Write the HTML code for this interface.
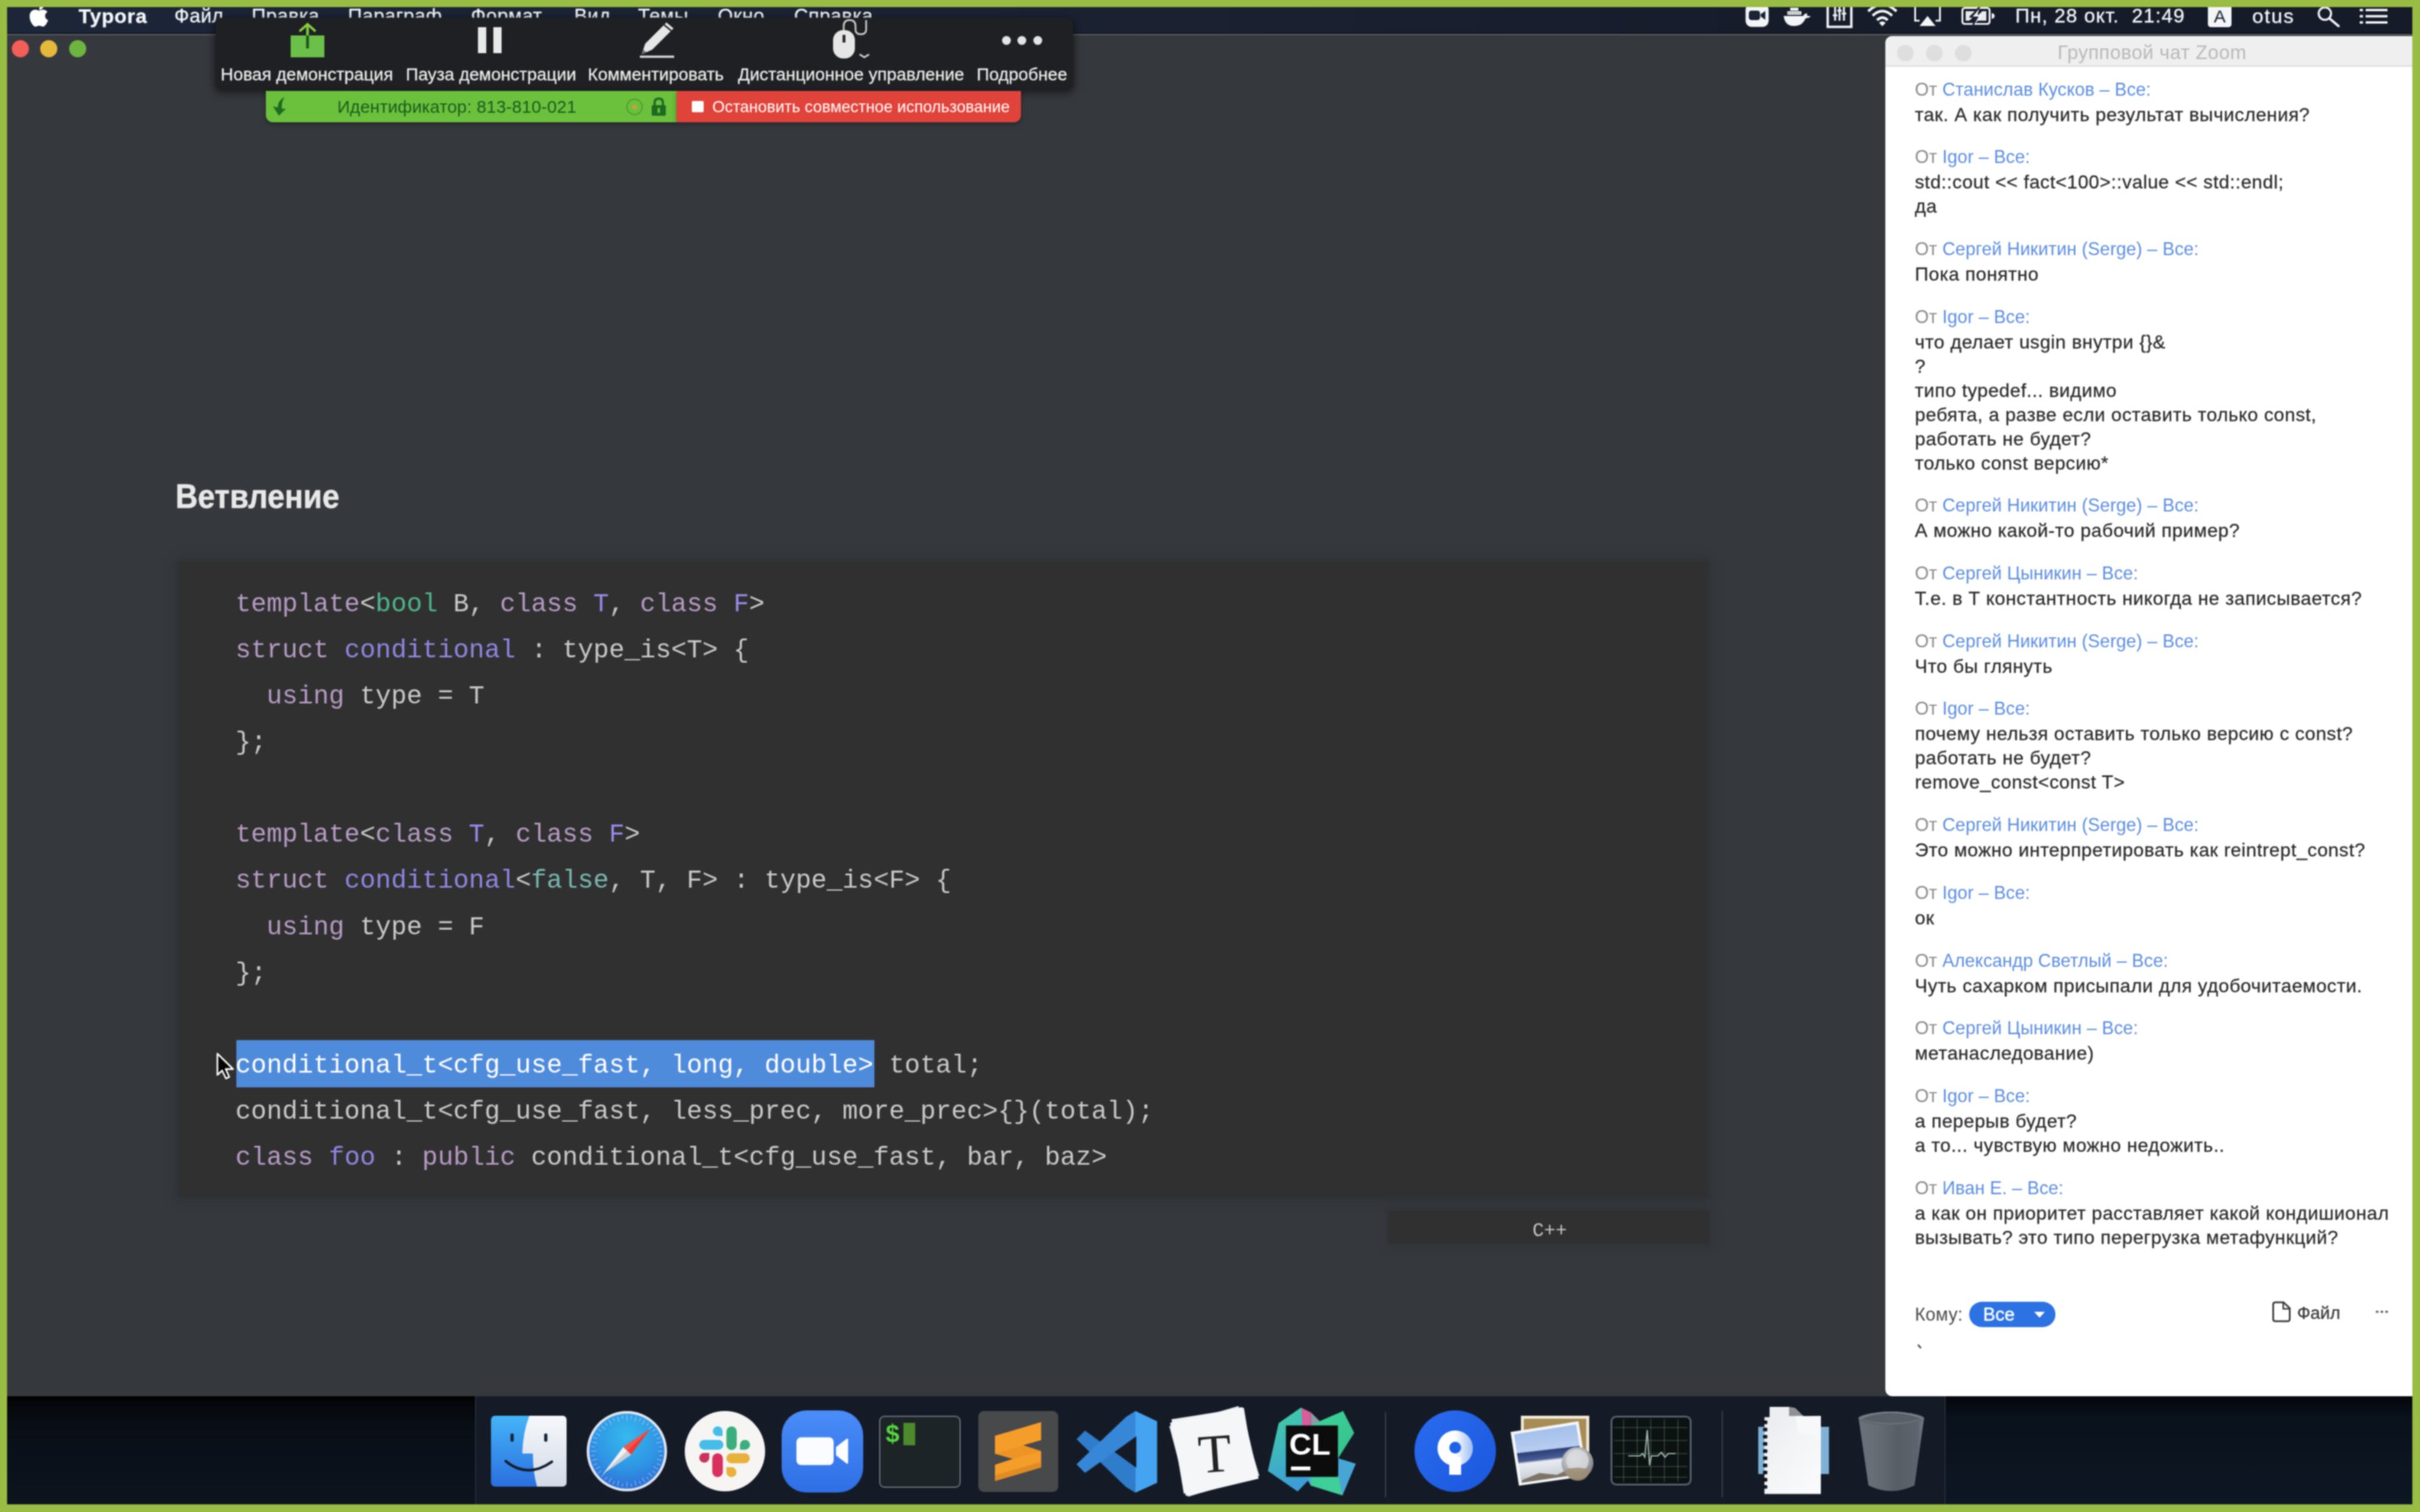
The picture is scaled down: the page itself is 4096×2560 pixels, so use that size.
<!DOCTYPE html>
<html><head><meta charset="utf-8"><title>screen</title><style>
*{box-sizing:border-box}
html,body{margin:0;padding:0}
body{width:4096px;height:2560px;background:#98bc44;position:relative;overflow:hidden;font-family:"Liberation Sans",sans-serif}
.a{position:absolute}
#root{position:absolute;left:0;top:0;width:4096px;height:2560px;overflow:hidden;filter:blur(1px)}
#desk{left:12px;top:12px;width:4071px;height:2535px;background:linear-gradient(#000 0,#000 2352px,#05070b 2364px,#0a0f17 2410px,#0c141e 2535px);overflow:hidden}
#menubar{left:12px;top:12px;width:4071px;height:44px;background:linear-gradient(90deg,#1c2638 0,#1b2333 40%,#171c2b 75%,#161b29 100%)}
.mi{-webkit-text-stroke:.4px #f4f6fa;top:5px;height:44px;line-height:44px;font-size:33px;color:#f4f6fa;white-space:pre;letter-spacing:.6px}
#win{left:12px;top:57px;width:4071px;height:2307px;background:#35383d;border-top:3px solid #505358}
.tl{top:68px;width:29px;height:29px;border-radius:50%}
#h1{left:297px;top:800.500px;-webkit-text-stroke:.7px #e8e8e8;font-size:56.500px;font-weight:700;color:#e8e8e8;line-height:80px;white-space:pre;transform-origin:0 50%;transform:scaleX(.925)}
#code{left:302px;top:951px;width:2588px;height:1076px;background:#303030;box-shadow:0 0 14px 4px rgba(40,42,50,.55)}
.cl{left:398.500px;height:78px;line-height:78px;font-family:"Liberation Mono",monospace;font-size:43.9px;color:#c9c9c9;white-space:pre}
.k{color:#b59bc4}.d{color:#8f86e0}.t{color:#4fb58d}.v{color:#9a8ce8}.at{color:#79b8b0}
#sel{left:400px;top:1761px;width:1080px;height:80px;background:#4f8bdb}
#lang{left:2350px;top:2050px;width:2543px;height:55px}
#chat{left:3191px;top:61px;width:893px;height:2303px;background:#fff;border-radius:12px 0 0 12px;overflow:hidden}
#chat .tb{left:0;top:0;width:893px;height:52px;background:#efefef;border-bottom:2px solid #dcdcdc}
.ch{left:3241px;height:45px;line-height:45px;font-size:30.5px;color:#8b8b8b;white-space:pre;letter-spacing:.1px}
.ch b{font-weight:400;color:#5b8de0}
.cm{-webkit-text-stroke:.3px #2a2a2a;left:3241px;height:41px;line-height:41px;font-size:32px;color:#2a2a2a;white-space:pre;letter-spacing:.62px}

.zl{-webkit-text-stroke:.35px #ececec;top:104px;height:43px;line-height:43px;font-size:29.6px;color:#ececec;white-space:pre}
#dock{left:804px;top:2364px;width:2489px;height:183px;background:#151b26;border-left:2px solid #262c36;border-right:2px solid #262c36}
</style></head><body>
<div id="root">
<div id="desk" class="a"></div>
<div class="a" style="left:3293px;top:2364px;width:790px;height:183px;background:linear-gradient(#04060a 0,#0a121c 36px,#0d1723 183px)"></div>
<div id="win" class="a"></div>
<div id="menubar" class="a"></div>
<div class="a tl" style="left:20px;background:#f35f57"></div>
<div class="a tl" style="left:68px;background:#e6b93c"></div>
<div class="a tl" style="left:117px;background:#6db53e"></div>
<div class="a mi" style="left:133px;font-weight:700;font-size:34px;letter-spacing:.9px">Typora</div>
<div class="a mi" style="left:295px">Файл</div>
<div class="a mi" style="left:426px">Правка</div>
<div class="a mi" style="left:589px">Параграф</div>
<div class="a mi" style="left:797px">Формат</div>
<div class="a mi" style="left:972px">Вид</div>
<div class="a mi" style="left:1080px">Темы</div>
<div class="a mi" style="left:1215px">Окно</div>
<div class="a mi" style="left:1344px">Справка</div>
<div class="a mi" style="left:3411px;font-size:33.5px;letter-spacing:1.25px">Пн, 28 окт.  21:49</div>
<div class="a mi" style="left:3812px;font-size:34px;letter-spacing:1.9px">otus</div>
<svg class="a" style="left:50px;top:5.500px" width="36.500" height="40.300" viewBox="0 0 38 42">
<path d="M25.500 1 C25.800 4.200 24.500 6.800 22.800 8.600 C21 10.400 18.800 11.300 17 11.100 C16.700 8.300 18 5.700 19.600 4.100 C21.300 2.300 23.800 1.200 25.500 1 Z M31.500 14.800 C29 16.300 27.300 18.900 27.400 21.900 C27.500 25.500 29.700 28.100 32.800 29.300 C32.100 31.600 31 33.800 29.500 35.900 C27.800 38.300 26 40.700 23.300 40.700 C20.700 40.700 19.900 39.100 16.900 39.100 C13.900 39.100 13 40.700 10.500 40.800 C7.900 40.900 6 38.200 4.300 35.800 C0.900 30.800 -1.700 21.800 1.800 15.700 C3.500 12.700 6.700 10.800 10.100 10.700 C12.600 10.700 15 12.400 16.600 12.400 C18.100 12.400 21.100 10.300 24.200 10.600 C25.500 10.700 29.200 11.100 31.500 14.800 Z" fill="#fff"/>
</svg>
<svg class="a" style="left:2954px;top:6px" width="40" height="40" viewBox="0 0 40 40">
<rect x="0.500" y="0.500" width="39" height="39" rx="10" fill="#f4f5f7"/>
<rect x="6" y="12" width="19" height="16" rx="4.500" fill="#1b2434"/>
<path d="M26 18 L34 12.500 V27.500 L26 22 Z" fill="#1b2434"/>
</svg>
<svg class="a" style="left:3018px;top:10px" width="48" height="36" viewBox="0 0 48 36">
<path d="M1 17 H34 Q37 12 41 13 Q40 15 41 17 Q45 16.500 47 18 Q43 21 38 21 Q33 34 18 34 Q3 34 1 17 Z" fill="#f4f5f7"/>
<rect x="7" y="9" width="24" height="6" rx="1" fill="#f4f5f7"/>
<rect x="12" y="3" width="14" height="5" rx="1" fill="#f4f5f7"/>
<path d="M8 12 H30" stroke="#1b2434" stroke-width="1.200" stroke-dasharray="3 1.500"/>
</svg>
<svg class="a" style="left:3091px;top:4px" width="45" height="45" viewBox="0 0 45 45">
<rect x="2.500" y="2.500" width="40" height="39" fill="none" stroke="#f4f5f7" stroke-width="4"/>
<path d="M15 7 V31 M22.500 7 V31 M30 7 V31" stroke="#f4f5f7" stroke-width="3.200"/>
<path d="M11 22 H19 M18.500 14 H26.500 M26 19 H34" stroke="#f4f5f7" stroke-width="3"/>
</svg>
<svg class="a" style="left:3159px;top:5px" width="54" height="42" viewBox="0 0 54 42">
<path d="M3 14 Q27 -8 51 14" stroke="#f4f5f7" stroke-width="4.500" fill="none"/>
<path d="M10.500 21.500 Q27 6 43.500 21.500" stroke="#f4f5f7" stroke-width="4.500" fill="none"/>
<path d="M18 29 Q27 20.500 36 29" stroke="#f4f5f7" stroke-width="4.500" fill="none"/>
<path d="M27 39.500 L21.500 33.500 Q27 29 32.500 33.500 Z" fill="#f4f5f7"/>
</svg>
<svg class="a" style="left:3239px;top:5px" width="47" height="42" viewBox="0 0 47 42">
<path d="M10 30 H2.500 V3 H44.500 V30 H37" stroke="#f4f5f7" stroke-width="3" fill="none"/>
<path d="M23.500 22 L37 39 H10 Z" fill="#f4f5f7"/>
</svg>
<svg class="a" style="left:3319px;top:11px" width="60" height="34" viewBox="0 0 60 34">
<rect x="2.500" y="2.500" width="46" height="27" rx="4" fill="none" stroke="#f4f5f7" stroke-width="3.200"/>
<path d="M52 11 Q57 12 57 16 Q57 20 52 21 Z" fill="#f4f5f7"/>
<path d="M8 8 H24 L14 17 H22 L14 24 H8 Z" fill="#f4f5f7" opacity=".95"/>
<path d="M43 8 V24 H26 L37 15 H29 L36 8 Z" fill="#f4f5f7" opacity=".95"/>
<path d="M33 -1 L17 17.500 H27 L19 35" stroke="#1b2434" stroke-width="3" fill="none"/>
<path d="M31 4 L20 17 H30 L23 30 L38 14 H28 Z" fill="#f4f5f7"/>
</svg>
<div class="a" style="left:3737px;top:4px;width:40px;height:42px;border-radius:5px;background:#f4f5f7;color:#1b2434;font-size:30px;line-height:47px;text-align:center;font-weight:400">A</div>
<svg class="a" style="left:3920px;top:9px" width="42" height="38" viewBox="0 0 42 38">
<circle cx="15" cy="14" r="10.500" fill="none" stroke="#f4f5f7" stroke-width="3.500"/>
<path d="M22.500 22 L38 35" stroke="#f4f5f7" stroke-width="4.200" stroke-linecap="round"/>
</svg>
<svg class="a" style="left:3993px;top:13px" width="50" height="30" viewBox="0 0 50 30">
<path d="M11 4 H48 M11 14.500 H48 M11 25 H48" stroke="#f4f5f7" stroke-width="4.200"/>
<path d="M1 4 H6.500 M1 14.500 H6.500 M1 25 H6.500" stroke="#f4f5f7" stroke-width="4.200"/>
</svg>
<div id="h1" class="a">Ветвление</div>
<div id="code" class="a"></div>
<div id="sel" class="a"></div>
<div class="a cl" style="top:983.5px"><span class="k">template</span>&lt;<span class="t">bool</span> B, <span class="k">class</span> <span class="v">T</span>, <span class="k">class</span> <span class="v">F</span>&gt;</div>
<div class="a cl" style="top:1061.7px"><span class="k">struct</span> <span class="d">conditional</span> : type_is&lt;T&gt; {</div>
<div class="a cl" style="top:1139.8px">  <span class="k">using</span> type = T</div>
<div class="a cl" style="top:1218.0px">};</div>
<div class="a cl" style="top:1374.2px"><span class="k">template</span>&lt;<span class="k">class</span> <span class="v">T</span>, <span class="k">class</span> <span class="v">F</span>&gt;</div>
<div class="a cl" style="top:1452.4px"><span class="k">struct</span> <span class="d">conditional</span>&lt;<span class="at">false</span>, T, F&gt; : type_is&lt;F&gt; {</div>
<div class="a cl" style="top:1530.6px">  <span class="k">using</span> type = F</div>
<div class="a cl" style="top:1608.7px">};</div>
<div class="a cl" style="top:1765.0px"><span style="color:#fff">conditional_t&lt;cfg_use_fast, long, double&gt;</span> total;</div>
<div class="a cl" style="top:1843.2px">conditional_t&lt;cfg_use_fast, less_prec, more_prec&gt;{}(total);</div>
<div class="a cl" style="top:1921.3px"><span class="k">class</span> <span class="d">foo</span> : <span class="k">public</span> conditional_t&lt;cfg_use_fast, bar, baz&gt;</div>
<div class="a" style="left:2350px;top:2050px;width:543px;height:55px;background:#303030;box-shadow:0 0 12px 4px rgba(44,46,52,.6)"></div>
<div class="a" style="left:2350px;top:2050px;width:543px;height:70px;line-height:70px;text-align:center;font-family:'Liberation Mono',monospace;font-size:32.5px;color:#c4c4c4;letter-spacing:0px;padding-left:3px">C++</div>
<div id="chat" class="a"><div class="a tb"></div></div>
<div class="a" style="left:3211px;top:76px;width:28px;height:28px;border-radius:50%;background:#dedede"></div>
<div class="a" style="left:3260px;top:76px;width:28px;height:28px;border-radius:50%;background:#dedede"></div>
<div class="a" style="left:3309px;top:76px;width:28px;height:28px;border-radius:50%;background:#dedede"></div>
<div class="a" style="left:3191px;top:61px;width:893px;height:53px;line-height:56px;text-align:center;font-size:33px;color:#b9b9b9;padding-left:10px;letter-spacing:.5px">Групповой чат Zoom</div>
<div class="a ch" style="top:128.5px">От <b>Станислав Кусков – Все:</b></div>
<div class="a cm" style="top:173.5px">так. А как получить результат вычисления?</div>
<div class="a ch" style="top:243.2px">От <b>Igor – Все:</b></div>
<div class="a cm" style="top:288.2px">std::cout &lt;&lt; fact&lt;100&gt;::value &lt;&lt; std::endl;</div>
<div class="a cm" style="top:329.2px">да</div>
<div class="a ch" style="top:398.9px">От <b>Сергей Никитин (Serge) – Все:</b></div>
<div class="a cm" style="top:443.9px">Пока понятно</div>
<div class="a ch" style="top:513.6px">От <b>Igor – Все:</b></div>
<div class="a cm" style="top:558.6px">что делает usgin внутри {}&amp;</div>
<div class="a cm" style="top:599.6px">?</div>
<div class="a cm" style="top:640.6px">типо typedef... видимо</div>
<div class="a cm" style="top:681.6px">ребята, а разве если оставить только const,</div>
<div class="a cm" style="top:722.6px">работать не будет?</div>
<div class="a cm" style="top:763.6px">только const версию*</div>
<div class="a ch" style="top:833.3px">От <b>Сергей Никитин (Serge) – Все:</b></div>
<div class="a cm" style="top:878.3px">А можно какой-то рабочий пример?</div>
<div class="a ch" style="top:948.0px">От <b>Сергей Цыникин – Все:</b></div>
<div class="a cm" style="top:993.0px">Т.е. в Т константность никогда не записывается?</div>
<div class="a ch" style="top:1062.7px">От <b>Сергей Никитин (Serge) – Все:</b></div>
<div class="a cm" style="top:1107.7px">Что бы глянуть</div>
<div class="a ch" style="top:1177.4px">От <b>Igor – Все:</b></div>
<div class="a cm" style="top:1222.4px">почему нельзя оставить только версию с const?</div>
<div class="a cm" style="top:1263.4px">работать не будет?</div>
<div class="a cm" style="top:1304.4px">remove_const&lt;const T&gt;</div>
<div class="a ch" style="top:1374.1px">От <b>Сергей Никитин (Serge) – Все:</b></div>
<div class="a cm" style="top:1419.1px">Это можно интерпретировать как reintrept_const?</div>
<div class="a ch" style="top:1488.8px">От <b>Igor – Все:</b></div>
<div class="a cm" style="top:1533.8px">ок</div>
<div class="a ch" style="top:1603.5px">От <b>Александр Светлый – Все:</b></div>
<div class="a cm" style="top:1648.5px">Чуть сахарком присыпали для удобочитаемости.</div>
<div class="a ch" style="top:1718.2px">От <b>Сергей Цыникин – Все:</b></div>
<div class="a cm" style="top:1763.2px">метанаследование)</div>
<div class="a ch" style="top:1832.9px">От <b>Igor – Все:</b></div>
<div class="a cm" style="top:1877.9px">а перерыв будет?</div>
<div class="a cm" style="top:1918.9px">а то... чувствую можно недожить..</div>
<div class="a ch" style="top:1988.6px">От <b>Иван Е. – Все:</b></div>
<div class="a cm" style="top:2033.6px">а как он приоритет расставляет какой кондишионал</div>
<div class="a cm" style="top:2074.6px">вызывать? это типо перегрузка метафункций?</div>
<div class="a" style="left:3241px;top:2205px;height:41px;line-height:41px;color:#4a4a4a;font-size:30.5px;white-space:pre;letter-spacing:.3px">Кому:</div>
<div class="a" style="left:3333px;top:2204px;width:146px;height:43px;border-radius:22px;background:#2d72e2"></div>
<div class="a" style="left:3356.500px;top:2204px;height:43px;line-height:44px;font-size:31px;color:#fff;-webkit-text-stroke:.5px #fff">Все</div>
<div class="a" style="left:3442.500px;top:2220.500px;width:0;height:0;border-left:9px solid transparent;border-right:9px solid transparent;border-top:10px solid #fff"></div>
<svg class="a" style="left:3844px;top:2201px" width="36" height="40" viewBox="0 0 36 40"><path d="M7 4 H21 L31.500 14 V32 Q31.500 36 27.500 36 H7 Q3.500 36 3.500 32 V8 Q3.500 4 7 4 Z" fill="none" stroke="#3c3c3c" stroke-width="3"/><path d="M20.500 4.500 V15 H31" fill="none" stroke="#3c3c3c" stroke-width="2.600"/></svg>
<div class="a" style="left:3888px;top:2202px;height:41px;line-height:41px;font-size:29.700px;color:#3a3a3a;-webkit-text-stroke:.4px #3a3a3a">Файл</div>
<div class="a" style="left:4021px;top:2218.500px;width:4.500px;height:4.500px;border-radius:50%;background:#6a6a6a"></div>
<div class="a" style="left:4029px;top:2218.500px;width:4.500px;height:4.500px;border-radius:50%;background:#6a6a6a"></div>
<div class="a" style="left:4037px;top:2218.500px;width:4.500px;height:4.500px;border-radius:50%;background:#6a6a6a"></div>
<div class="a" style="left:3245px;top:2278px;width:7.500px;height:2.800px;background:#555;transform:rotate(48deg);border-radius:1px"></div>
<svg class="a" style="left:364px;top:1780px" width="36" height="52" viewBox="-4 -4 36 52"><path d="M0 0 V36 L8 28.500 L14.500 42 L20 39.500 L14 26 H26.500 Z" fill="#050505" stroke="#fff" stroke-width="2.800" stroke-linejoin="round"/></svg>
<div class="a" style="left:365px;top:30px;width:1451px;height:121px;background:#1f2023;border-radius:10px;box-shadow:0 4px 14px 2px rgba(0,0,0,.55)"></div>
<div class="a zl" style="left:373.6px;">Новая демонстрация</div>
<div class="a zl" style="left:686.7px;">Пауза демонстрации</div>
<div class="a zl" style="left:994.8px;">Комментировать</div>
<div class="a zl" style="left:1249px;">Дистанционное управление</div>
<div class="a zl" style="left:1653px;">Подробнее</div>
<svg class="a" style="left:480px;top:34px" width="80" height="70" viewBox="0 0 80 70">
<rect x="12" y="26" width="57" height="37" fill="#6cc04a"/>
<path d="M40.500 48 V9" stroke="#1d5a1d" stroke-width="5" fill="none"/>
<path d="M40.500 26 V9" stroke="#7cc63c" stroke-width="4.500" fill="none"/>
<path d="M27 19 L40.500 7 L54 19" stroke="#8ccf3f" stroke-width="4" fill="none"/>
</svg>
<div class="a" style="left:809px;top:46px;width:13.500px;height:44px;background:#e9e9e9"></div>
<div class="a" style="left:835px;top:46px;width:14px;height:44px;background:#e9e9e9"></div>
<svg class="a" style="left:1076px;top:32px" width="72" height="72" viewBox="0 0 72 72">
<path d="M52 6 L64 16 L28 52 L10 60 L16 42 Z" fill="#e6e6e6"/>
<path d="M48 10 L60 20" stroke="#1f2023" stroke-width="2.500"/>
<path d="M10 60 L18 56.500 L13 52 Z" fill="#1f2023" opacity=".55"/>
<rect x="7" y="62" width="58" height="4" fill="#cfcfcf"/>
</svg>
<svg class="a" style="left:1400px;top:26px" width="80" height="80" viewBox="0 0 80 80">
<path d="M28 26 V18 Q28 8 38 8 Q48 8 48 18 V24 Q48 32 57 32 Q66 32 66 24 V8" stroke="#c9c9c9" stroke-width="3" fill="none"/>
<rect x="10" y="25" width="37" height="48" rx="17" fill="#e6e6e6"/>
<rect x="26" y="33" width="5" height="13" fill="#2a2b2e"/>
<path d="M55 66 L63 71 L71 66" stroke="#d0d0d0" stroke-width="3" fill="none"/>
</svg>
<div class="a" style="left:1695.5px;top:61px;width:15px;height:15px;border-radius:50%;background:#e4e4e4"></div>
<div class="a" style="left:1722.0px;top:61px;width:15px;height:15px;border-radius:50%;background:#e4e4e4"></div>
<div class="a" style="left:1749.0px;top:61px;width:15px;height:15px;border-radius:50%;background:#e4e4e4"></div>
<div class="a" style="left:450px;top:154px;width:696px;height:53px;background:#6cc13c;border-radius:0 0 0 12px;box-shadow:0 3px 8px rgba(0,0,0,.35)"></div>
<div class="a" style="left:1145px;top:154px;width:583px;height:53px;background:#e0433a;border-radius:0 0 12px 0;box-shadow:0 3px 8px rgba(0,0,0,.35)"></div>
<div class="a" style="left:571px;top:154px;height:53px;line-height:53px;font-size:29.6px;color:#1b5a20;white-space:pre;letter-spacing:.1px">Идентификатор: 813-810-021</div>
<div class="a" style="left:1205.5px;top:154px;height:53px;line-height:53px;font-size:27.3px;color:#fff;white-space:pre">Остановить совместное использование</div>
<div class="a" style="left:1171px;top:171px;width:20px;height:19px;background:#fff;border-radius:2px"></div>
<svg class="a" style="left:456px;top:160px" width="40" height="42" viewBox="0 0 40 42">
<path d="M26 4 Q14 10 14 22 L6 20 L16 36 L28 24 L21 24 Q20 12 26 4 Z" fill="#1f6a22"/>
</svg>
<div class="a" style="left:1060px;top:167px;width:28px;height:28px;border-radius:50%;border:2.500px solid #4e9a2e"></div>
<div class="a" style="left:1070px;top:177px;width:8px;height:8px;border-radius:50%;background:#c9a23c"></div>
<svg class="a" style="left:1100px;top:164px" width="30" height="34" viewBox="0 0 30 34">
<path d="M8 15 V10 Q8 3 15 3 Q22 3 22 10 V15" stroke="#1f6a22" stroke-width="4" fill="none"/>
<rect x="3" y="14" width="24" height="18" rx="2" fill="#1f6a22"/>
<rect x="13" y="19" width="4" height="8" fill="#6cc13c"/>
</svg>
<div id="dock" class="a"></div>
<svg class="a" style="left:831px;top:2397px" width="128" height="120" viewBox="0 0 128 120">
<defs><linearGradient id="fb" x1="0" y1="0" x2="0" y2="1"><stop offset="0" stop-color="#45b4f7"/><stop offset="1" stop-color="#2b6fe0"/></linearGradient>
<linearGradient id="fw" x1="0" y1="0" x2="0" y2="1"><stop offset="0" stop-color="#f6f8fb"/><stop offset="1" stop-color="#d3dbe8"/></linearGradient>
<clipPath id="fc"><rect x="0" y="0" width="128" height="120" rx="7"/></clipPath></defs>
<g clip-path="url(#fc)"><rect width="128" height="120" fill="url(#fb)"/>
<path d="M65 0 Q54 28 53 64 H71 Q71 96 78 120 H128 V0 Z" fill="url(#fw)"/>
<rect x="33" y="30" width="5.500" height="14" rx="2.500" fill="#16243a"/><rect x="90" y="30" width="5.500" height="14" rx="2.500" fill="#16243a"/>
<path d="M25 77 Q62 107 103 78" stroke="#141e30" stroke-width="4.500" fill="none" stroke-linecap="round"/></g>
</svg>
<svg class="a" style="left:991px;top:2387px" width="140" height="140" viewBox="0 0 140 140">
<defs><radialGradient id="sg" cx=".5" cy=".3" r=".8"><stop offset="0" stop-color="#36b9ee"/><stop offset=".55" stop-color="#2f94e4"/><stop offset="1" stop-color="#2c62d2"/></radialGradient></defs>
<circle cx="70" cy="70" r="68" fill="#dfe5f2"/><circle cx="70" cy="70" r="63.500" fill="url(#sg)"/>
<g opacity=".55"><line x1="70" y1="9" x2="70" y2="18" stroke="#dfeaf8" stroke-width="1.300" transform="rotate(0.0 70 70)"/><line x1="70" y1="9" x2="70" y2="15" stroke="#dfeaf8" stroke-width="1.300" transform="rotate(7.5 70 70)"/><line x1="70" y1="9" x2="70" y2="18" stroke="#dfeaf8" stroke-width="1.300" transform="rotate(15.0 70 70)"/><line x1="70" y1="9" x2="70" y2="15" stroke="#dfeaf8" stroke-width="1.300" transform="rotate(22.5 70 70)"/><line x1="70" y1="9" x2="70" y2="18" stroke="#dfeaf8" stroke-width="1.300" transform="rotate(30.0 70 70)"/><line x1="70" y1="9" x2="70" y2="15" stroke="#dfeaf8" stroke-width="1.300" transform="rotate(37.5 70 70)"/><line x1="70" y1="9" x2="70" y2="18" stroke="#dfeaf8" stroke-width="1.300" transform="rotate(45.0 70 70)"/><line x1="70" y1="9" x2="70" y2="15" stroke="#dfeaf8" stroke-width="1.300" transform="rotate(52.5 70 70)"/><line x1="70" y1="9" x2="70" y2="18" stroke="#dfeaf8" stroke-width="1.300" transform="rotate(60.0 70 70)"/><line x1="70" y1="9" x2="70" y2="15" stroke="#dfeaf8" stroke-width="1.300" transform="rotate(67.5 70 70)"/><line x1="70" y1="9" x2="70" y2="18" stroke="#dfeaf8" stroke-width="1.300" transform="rotate(75.0 70 70)"/><line x1="70" y1="9" x2="70" y2="15" stroke="#dfeaf8" stroke-width="1.300" transform="rotate(82.5 70 70)"/><line x1="70" y1="9" x2="70" y2="18" stroke="#dfeaf8" stroke-width="1.300" transform="rotate(90.0 70 70)"/><line x1="70" y1="9" x2="70" y2="15" stroke="#dfeaf8" stroke-width="1.300" transform="rotate(97.5 70 70)"/><line x1="70" y1="9" x2="70" y2="18" stroke="#dfeaf8" stroke-width="1.300" transform="rotate(105.0 70 70)"/><line x1="70" y1="9" x2="70" y2="15" stroke="#dfeaf8" stroke-width="1.300" transform="rotate(112.5 70 70)"/><line x1="70" y1="9" x2="70" y2="18" stroke="#dfeaf8" stroke-width="1.300" transform="rotate(120.0 70 70)"/><line x1="70" y1="9" x2="70" y2="15" stroke="#dfeaf8" stroke-width="1.300" transform="rotate(127.5 70 70)"/><line x1="70" y1="9" x2="70" y2="18" stroke="#dfeaf8" stroke-width="1.300" transform="rotate(135.0 70 70)"/><line x1="70" y1="9" x2="70" y2="15" stroke="#dfeaf8" stroke-width="1.300" transform="rotate(142.5 70 70)"/><line x1="70" y1="9" x2="70" y2="18" stroke="#dfeaf8" stroke-width="1.300" transform="rotate(150.0 70 70)"/><line x1="70" y1="9" x2="70" y2="15" stroke="#dfeaf8" stroke-width="1.300" transform="rotate(157.5 70 70)"/><line x1="70" y1="9" x2="70" y2="18" stroke="#dfeaf8" stroke-width="1.300" transform="rotate(165.0 70 70)"/><line x1="70" y1="9" x2="70" y2="15" stroke="#dfeaf8" stroke-width="1.300" transform="rotate(172.5 70 70)"/><line x1="70" y1="9" x2="70" y2="18" stroke="#dfeaf8" stroke-width="1.300" transform="rotate(180.0 70 70)"/><line x1="70" y1="9" x2="70" y2="15" stroke="#dfeaf8" stroke-width="1.300" transform="rotate(187.5 70 70)"/><line x1="70" y1="9" x2="70" y2="18" stroke="#dfeaf8" stroke-width="1.300" transform="rotate(195.0 70 70)"/><line x1="70" y1="9" x2="70" y2="15" stroke="#dfeaf8" stroke-width="1.300" transform="rotate(202.5 70 70)"/><line x1="70" y1="9" x2="70" y2="18" stroke="#dfeaf8" stroke-width="1.300" transform="rotate(210.0 70 70)"/><line x1="70" y1="9" x2="70" y2="15" stroke="#dfeaf8" stroke-width="1.300" transform="rotate(217.5 70 70)"/><line x1="70" y1="9" x2="70" y2="18" stroke="#dfeaf8" stroke-width="1.300" transform="rotate(225.0 70 70)"/><line x1="70" y1="9" x2="70" y2="15" stroke="#dfeaf8" stroke-width="1.300" transform="rotate(232.5 70 70)"/><line x1="70" y1="9" x2="70" y2="18" stroke="#dfeaf8" stroke-width="1.300" transform="rotate(240.0 70 70)"/><line x1="70" y1="9" x2="70" y2="15" stroke="#dfeaf8" stroke-width="1.300" transform="rotate(247.5 70 70)"/><line x1="70" y1="9" x2="70" y2="18" stroke="#dfeaf8" stroke-width="1.300" transform="rotate(255.0 70 70)"/><line x1="70" y1="9" x2="70" y2="15" stroke="#dfeaf8" stroke-width="1.300" transform="rotate(262.5 70 70)"/><line x1="70" y1="9" x2="70" y2="18" stroke="#dfeaf8" stroke-width="1.300" transform="rotate(270.0 70 70)"/><line x1="70" y1="9" x2="70" y2="15" stroke="#dfeaf8" stroke-width="1.300" transform="rotate(277.5 70 70)"/><line x1="70" y1="9" x2="70" y2="18" stroke="#dfeaf8" stroke-width="1.300" transform="rotate(285.0 70 70)"/><line x1="70" y1="9" x2="70" y2="15" stroke="#dfeaf8" stroke-width="1.300" transform="rotate(292.5 70 70)"/><line x1="70" y1="9" x2="70" y2="18" stroke="#dfeaf8" stroke-width="1.300" transform="rotate(300.0 70 70)"/><line x1="70" y1="9" x2="70" y2="15" stroke="#dfeaf8" stroke-width="1.300" transform="rotate(307.5 70 70)"/><line x1="70" y1="9" x2="70" y2="18" stroke="#dfeaf8" stroke-width="1.300" transform="rotate(315.0 70 70)"/><line x1="70" y1="9" x2="70" y2="15" stroke="#dfeaf8" stroke-width="1.300" transform="rotate(322.5 70 70)"/><line x1="70" y1="9" x2="70" y2="18" stroke="#dfeaf8" stroke-width="1.300" transform="rotate(330.0 70 70)"/><line x1="70" y1="9" x2="70" y2="15" stroke="#dfeaf8" stroke-width="1.300" transform="rotate(337.5 70 70)"/><line x1="70" y1="9" x2="70" y2="18" stroke="#dfeaf8" stroke-width="1.300" transform="rotate(345.0 70 70)"/><line x1="70" y1="9" x2="70" y2="15" stroke="#dfeaf8" stroke-width="1.300" transform="rotate(352.5 70 70)"/></g>
<path d="M110 32 L64 63 L77 76 Z" fill="#ee3b33"/><path d="M110 32 L64 63 L70.500 69.500 Z" fill="#f2564c"/>
<path d="M30 108 L64 63 L77 76 Z" fill="#f1f1f1"/><path d="M30 108 L70.500 69.500 L77 76 Z" fill="#c9ccd2"/>
</svg>
<svg class="a" style="left:1158px;top:2388px" width="138" height="138" viewBox="0 0 138 138">
<circle cx="69" cy="69" r="68" fill="#f6f5f4"/>
<g>
<rect x="25.500" y="50" width="41" height="16.500" rx="8.250" fill="#45bde8"/><rect x="48.500" y="27" width="16.500" height="16.500" rx="8.250" fill="#45bde8"/><rect x="56.750" y="35.250" width="8.250" height="8.250" fill="#45bde8"/>
<rect x="71.500" y="27" width="17.500" height="40" rx="8.750" fill="#3aae7c"/><rect x="94.500" y="50" width="17" height="16.500" rx="8.250" fill="#3aae7c"/><rect x="94.500" y="58.250" width="8.250" height="8.250" fill="#3aae7c"/>
<rect x="47.500" y="72.500" width="18" height="40.500" rx="9" fill="#d8305e"/><rect x="25.500" y="72" width="17" height="16.500" rx="8.250" fill="#c8345c"/><rect x="34.250" y="72" width="8.250" height="8.250" fill="#c8345c"/>
<rect x="71.500" y="72.500" width="39.500" height="17" rx="8.500" fill="#e8b13c"/><rect x="71.500" y="96" width="17" height="17" rx="8.500" fill="#e8b13c"/><rect x="71.500" y="96" width="8.500" height="8.500" fill="#e8b13c"/>
</g></svg>
<svg class="a" style="left:1323px;top:2388px" width="138" height="139" viewBox="0 0 138 139">
<defs><linearGradient id="zg" x1="0" y1="0" x2="0" y2="1"><stop offset="0" stop-color="#4a8cf8"/><stop offset="1" stop-color="#2f6fe6"/></linearGradient></defs>
<rect width="138" height="139" rx="42" fill="url(#zg)"/>
<rect x="25" y="45.500" width="63" height="47" rx="8" fill="#fbfcff"/>
<path d="M92 62 L110 48 Q112.500 47 112.500 50 V88 Q112.500 91 110 90 L92 76 Z" fill="#fbfcff"/>
</svg>
<div class="a" style="left:1488px;top:2397px;width:138px;height:121.500px;border-radius:9px;background:#1d2428;border:2.500px solid #6d757e"></div>
<div class="a" style="left:1499px;top:2403px;font-family:'Liberation Sans',sans-serif;font-weight:700;font-size:42px;line-height:50px;color:#55d63c">$</div>
<div class="a" style="left:1529px;top:2409px;width:19.500px;height:38px;background:#4c8a2c"></div>
<svg class="a" style="left:1656px;top:2389px" width="135" height="137" viewBox="0 0 135 137">
<rect width="135" height="137" rx="9" fill="#48494b"/>
<path d="M28 42 L106.200 18.800 V49.200 L75.800 57.900 L106.200 68 V95.500 L28 118.600 V91 L58.400 81 L28 72.300 Z" fill="#f59d2a"/>
<path d="M28 72.300 L58.400 81 L106.200 68 L75.800 57.900 Z" fill="#ee9424"/>
<path d="M28 118.600 L106.200 95.500 V86 L28 109 Z" fill="#e08c24"/>
</svg>
<svg class="a" style="left:1821.600px;top:2389px" width="137" height="139" viewBox="0 0 137 139">
<polygon points="0.0,47.7 14.5,33.3 104.7,98.4 99.8,138.3 83.9,128.7" fill="#2f7ccb"/>
<polygon points="99.8,0.0 104.7,40.5 14.5,104.7 0.0,90.3 83.9,10.1" fill="#3787d8"/>
<polygon points="99.8,0.0 136.5,17.4 136.5,121.5 99.8,138.3" fill="#45a4f2"/>
<polygon points="101.3,42.8 101.3,96.0 66.0,69.4" fill="#151b26"/>
</svg>
<svg class="a" style="left:1979px;top:2380px" width="154" height="156" viewBox="0 0 154 156">
<polygon points="0.0,34.7 117.2,0.6 152.5,118.6 31.8,154.2" fill="#e4e5e8"/>
<polygon points="3.8,23.1 126.4,3.5 146.1,124.4 24.6,149.0" fill="#eeeff1"/>
<polygon points="1.4,28.9 123.5,2.3 151.3,123.5 28.1,152.8" fill="#f5f6f8"/>
<g transform="rotate(-4 77 80)"><text x="77" y="112" text-anchor="middle" font-family="Liberation Serif,serif" font-size="92" fill="#232323">T</text></g>
</svg>
<svg class="a" style="left:2146px;top:2383px" width="150" height="150" viewBox="0 0 150 150">
<defs><linearGradient id="cg" x1="0" y1="0" x2=".3" y2="1"><stop offset="0" stop-color="#43d3a0"/><stop offset="1" stop-color="#3d9ed6"/></linearGradient>
<linearGradient id="cg2" x1="0" y1="0" x2="1" y2="1"><stop offset="0" stop-color="#3fd39a"/><stop offset="1" stop-color="#35c08d"/></linearGradient></defs>
<polygon points="56.2,0.0 18.2,26.4 0.0,107.4 50.3,142.2 72.7,119.0 72.7,29.8" fill="url(#cg)"/>
<polygon points="72.7,29.8 127.3,6.0 146.1,43.0 119.0,86.0 72.7,86.0" fill="url(#cg2)"/>
<polygon points="119.0,86.0 148.8,95.2 126.3,148.8 72.7,132.2 62.8,115.7 119.0,115.7" fill="#48a6d4"/>
<polygon points="72.7,119.0 119.0,115.7 126.3,148.8 72.7,132.2" fill="#3fcf98"/>
<polygon points="56.9,0.7 72.7,8.3 72.7,31.4 58.2,31.4" fill="#d75d9c"/>
<polygon points="72.7,8.3 87.6,23.1 72.7,31.4" fill="#8f9aa8"/>
<rect x="30.500" y="30.500" width="88" height="87" fill="#0c0c0c"/>
<text x="36" y="80" font-family="Liberation Sans,sans-serif" font-weight="700" font-size="50" fill="#fff" textLength="70" lengthAdjust="spacingAndGlyphs">CL</text>
<rect x="39" y="100" width="33" height="6.500" fill="#fff"/>
</svg>
<div class="a" style="left:2343.500px;top:2391px;width:2.500px;height:144px;background:#39404c"></div>
<div class="a" style="left:2913.500px;top:2389px;width:2.500px;height:146px;background:#39404c"></div>
<svg class="a" style="left:2393px;top:2387px" width="140" height="140" viewBox="0 0 140 140">
<defs><linearGradient id="stg" x1="0" y1="0" x2="1" y2="1"><stop offset="0" stop-color="#2a6cf0"/><stop offset="1" stop-color="#1a57dc"/></linearGradient>
<linearGradient id="stk" x1="0" y1="0" x2="1" y2="0"><stop offset="0" stop-color="#fff"/><stop offset=".5" stop-color="#fff"/><stop offset="1" stop-color="#9dbcf2"/></linearGradient></defs>
<circle cx="70" cy="70" r="69" fill="url(#stg)"/>
<circle cx="70" cy="65" r="30" fill="url(#stk)"/>
<rect x="60" y="80" width="20" height="30" fill="#fff"/>
<circle cx="70" cy="64" r="10" fill="#1f62e6"/>
</svg>
<svg class="a" style="left:2556px;top:2397px" width="146" height="128" viewBox="0 0 146 128">
<defs><linearGradient id="pv" x1="0" y1="0" x2="0" y2="1" gradientTransform="rotate(-8 .5 .5)"><stop offset="0" stop-color="#9fbdea"/><stop offset=".42" stop-color="#b9cdf0"/><stop offset=".44" stop-color="#2d3f78"/><stop offset=".58" stop-color="#4a5d95"/><stop offset=".62" stop-color="#e8ecf2"/><stop offset=".85" stop-color="#cfd4dc"/><stop offset="1" stop-color="#8a8478"/></linearGradient>
<radialGradient id="lp" cx=".4" cy=".35" r=".7"><stop offset="0" stop-color="#e2e4e6"/><stop offset=".6" stop-color="#a9abad"/><stop offset="1" stop-color="#77797b"/></radialGradient></defs>
<polygon points="18.2,0.0 133.9,0.0 133.9,95.2 18.2,95.2" fill="#f1eadb"/>
<polygon points="23.1,5.0 128.9,5.0 128.9,90.3 23.1,90.3" fill="#a88c55"/>
<polygon points="0.7,27.4 115.7,9.3 130.6,101.8 14.9,118.4" fill="#f4f5f7"/>
<polygon points="6.6,31.4 111.7,14.9 125.0,97.9 19.2,113.4" fill="url(#pv)"/>
<polygon points="21.5,108.4 49.6,96.9 79.3,100.2 92.6,93.6 122.3,98.5 125.0,97.9 19.2,113.4" fill="#7d7466"/>
<circle cx="114" cy="80" r="27" fill="url(#lp)"/>
<circle cx="114" cy="76" r="19" fill="#d9dcdf" opacity=".8"/>
<path d="M92 92 Q114 84 136 92 Q130 110 114 110 Q98 110 92 92 Z" fill="#9c8f78" opacity=".9"/>
</svg>
<svg class="a" style="left:2726px;top:2397px" width="137" height="118" viewBox="0 0 137 118">
<rect x="1.500" y="1.500" width="134" height="115" rx="8" fill="#0c1211" stroke="#58636f" stroke-width="3"/>
<line x1="22" y1="6" x2="22" y2="112" stroke="#6f8f7c" stroke-opacity=".42" stroke-width="1.600"/><line x1="45" y1="6" x2="45" y2="112" stroke="#6f8f7c" stroke-opacity=".42" stroke-width="1.600"/><line x1="68" y1="6" x2="68" y2="112" stroke="#6f8f7c" stroke-opacity=".42" stroke-width="1.600"/><line x1="91" y1="6" x2="91" y2="112" stroke="#6f8f7c" stroke-opacity=".42" stroke-width="1.600"/><line x1="114" y1="6" x2="114" y2="112" stroke="#6f8f7c" stroke-opacity=".42" stroke-width="1.600"/><line x1="6" y1="20" x2="130" y2="20" stroke="#6f8f7c" stroke-opacity=".42" stroke-width="1.600"/><line x1="6" y1="42" x2="130" y2="42" stroke="#6f8f7c" stroke-opacity=".42" stroke-width="1.600"/><line x1="6" y1="64" x2="130" y2="64" stroke="#6f8f7c" stroke-opacity=".42" stroke-width="1.600"/><line x1="6" y1="86" x2="130" y2="86" stroke="#6f8f7c" stroke-opacity=".42" stroke-width="1.600"/><line x1="6" y1="104" x2="130" y2="104" stroke="#6f8f7c" stroke-opacity=".42" stroke-width="1.600"/>
<path d="M30 68 H50 L54 64 L58 70 L62 24 L66 84 L69 68 H80 L86 62 L92 70 L98 64 H110" stroke="#b9d2c6" stroke-width="2.200" fill="none" stroke-opacity=".85"/>
</svg>
<svg class="a" style="left:2976.400px;top:2381.700px" width="122" height="150" viewBox="0 0 122 150">
<defs><linearGradient id="dg" x1="0" y1="0" x2="1" y2="1"><stop offset="0" stop-color="#e9ebee"/><stop offset=".5" stop-color="#f4f5f7"/><stop offset="1" stop-color="#fbfbfd"/></linearGradient></defs>
<polygon points="0.0,33.8 119.7,33.8 119.7,113.7 0.0,113.7" fill="#7fb1d6"/>
<polygon points="19.1,0.0 52.1,0.0 76.4,15.6 76.4,30.4 19.1,30.4" fill="#eceef1"/>
<polygon points="10.4,17.4 105.9,15.6 105.9,147.5 10.4,147.5" fill="url(#dg)"/>
<polygon points="52.1,0.0 62.5,1.7 76.4,15.6 52.1,15.6" fill="#8e9094"/>
<polygon points="62.5,15.6 105.9,15.6 105.9,59.9 90.2,47.7 67.7,44.3" fill="#f7f8fa"/>
<rect x="8.0" y="23.1" width="7.3" height="6.2" rx="1.500" fill="#10151e"/><rect x="8.0" y="35.2" width="7.3" height="6.2" rx="1.500" fill="#10151e"/><rect x="8.0" y="47.4" width="7.3" height="6.2" rx="1.500" fill="#10151e"/><rect x="8.0" y="59.5" width="7.3" height="6.2" rx="1.500" fill="#10151e"/><rect x="8.0" y="71.7" width="7.3" height="6.2" rx="1.500" fill="#10151e"/><rect x="8.0" y="83.8" width="7.3" height="6.2" rx="1.500" fill="#10151e"/><rect x="8.0" y="96.0" width="7.3" height="6.2" rx="1.500" fill="#10151e"/><rect x="8.0" y="108.1" width="7.3" height="6.2" rx="1.500" fill="#10151e"/><rect x="8.0" y="120.3" width="7.3" height="6.2" rx="1.500" fill="#10151e"/><rect x="8.0" y="132.4" width="7.3" height="6.2" rx="1.500" fill="#10151e"/>
</svg>
<svg class="a" style="left:3144.800px;top:2389.500px" width="113" height="139" viewBox="0 0 113 139">
<defs><linearGradient id="tg" x1="0" y1="0" x2="1" y2="0"><stop offset="0" stop-color="#6a727b"/><stop offset=".25" stop-color="#666d75"/><stop offset=".6" stop-color="#585e66"/><stop offset=".9" stop-color="#5d646d"/><stop offset="1" stop-color="#78818b"/></linearGradient></defs>
<path d="M0.9,12.1 L17.4,125.0 Q55.5,144.0 95.5,125.0 L111.4,12.1 Z" fill="url(#tg)"/>
<ellipse cx="56" cy="11.500" rx="55.500" ry="11" fill="#5a6068"/>
<path d="M0.9,12.1 Q55.5,-10.4 111.4,12.1" stroke="#7c848d" stroke-width="2.500" fill="none"/>
<path d="M0.9,12.1 Q55.5,29.5 111.4,12.1" stroke="#737b84" stroke-width="2" fill="none" opacity=".8"/>
</svg>
<div class="a" style="left:0;top:0;width:4096px;height:12px;background:#98bc44"></div><div class="a" style="left:0;top:0;width:12px;height:2560px;background:#98bc44"></div><div class="a" style="left:4083px;top:0;width:13px;height:2560px;background:#98bc44"></div><div class="a" style="left:0;top:2547px;width:4096px;height:13px;background:#98bc44"></div>
</div>
</body></html>
